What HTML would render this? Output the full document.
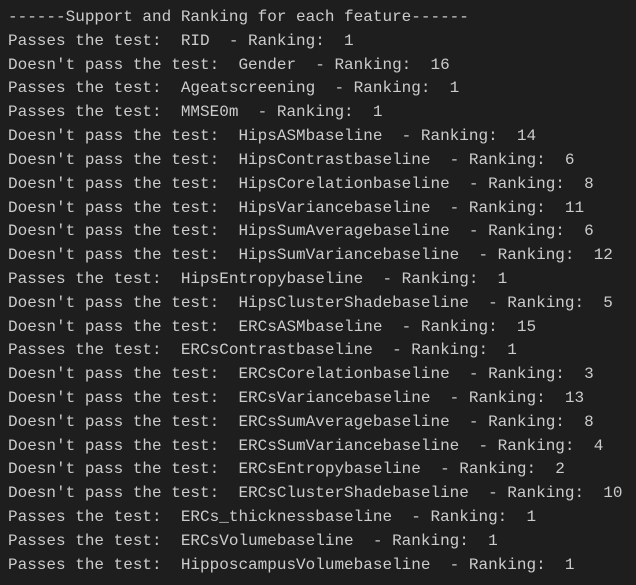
<!DOCTYPE html>
<html><head><style>
html,body{margin:0;padding:0;background:#1e1e1e;width:636px;height:585px;overflow:hidden}
pre{margin:0;padding:6px 0 0 8px;font-family:"Liberation Mono",monospace;font-size:16px;line-height:23.82px;color:#cccccc}
</style></head><body><pre>------Support and Ranking for each feature------
Passes the test:  RID  - Ranking:  1
Doesn't pass the test:  Gender  - Ranking:  16
Passes the test:  Ageatscreening  - Ranking:  1
Passes the test:  MMSE0m  - Ranking:  1
Doesn't pass the test:  HipsASMbaseline  - Ranking:  14
Doesn't pass the test:  HipsContrastbaseline  - Ranking:  6
Doesn't pass the test:  HipsCorelationbaseline  - Ranking:  8
Doesn't pass the test:  HipsVariancebaseline  - Ranking:  11
Doesn't pass the test:  HipsSumAveragebaseline  - Ranking:  6
Doesn't pass the test:  HipsSumVariancebaseline  - Ranking:  12
Passes the test:  HipsEntropybaseline  - Ranking:  1
Doesn't pass the test:  HipsClusterShadebaseline  - Ranking:  5
Doesn't pass the test:  ERCsASMbaseline  - Ranking:  15
Passes the test:  ERCsContrastbaseline  - Ranking:  1
Doesn't pass the test:  ERCsCorelationbaseline  - Ranking:  3
Doesn't pass the test:  ERCsVariancebaseline  - Ranking:  13
Doesn't pass the test:  ERCsSumAveragebaseline  - Ranking:  8
Doesn't pass the test:  ERCsSumVariancebaseline  - Ranking:  4
Doesn't pass the test:  ERCsEntropybaseline  - Ranking:  2
Doesn't pass the test:  ERCsClusterShadebaseline  - Ranking:  10
Passes the test:  ERCs_thicknessbaseline  - Ranking:  1
Passes the test:  ERCsVolumebaseline  - Ranking:  1
Passes the test:  HipposcampusVolumebaseline  - Ranking:  1</pre></body></html>
